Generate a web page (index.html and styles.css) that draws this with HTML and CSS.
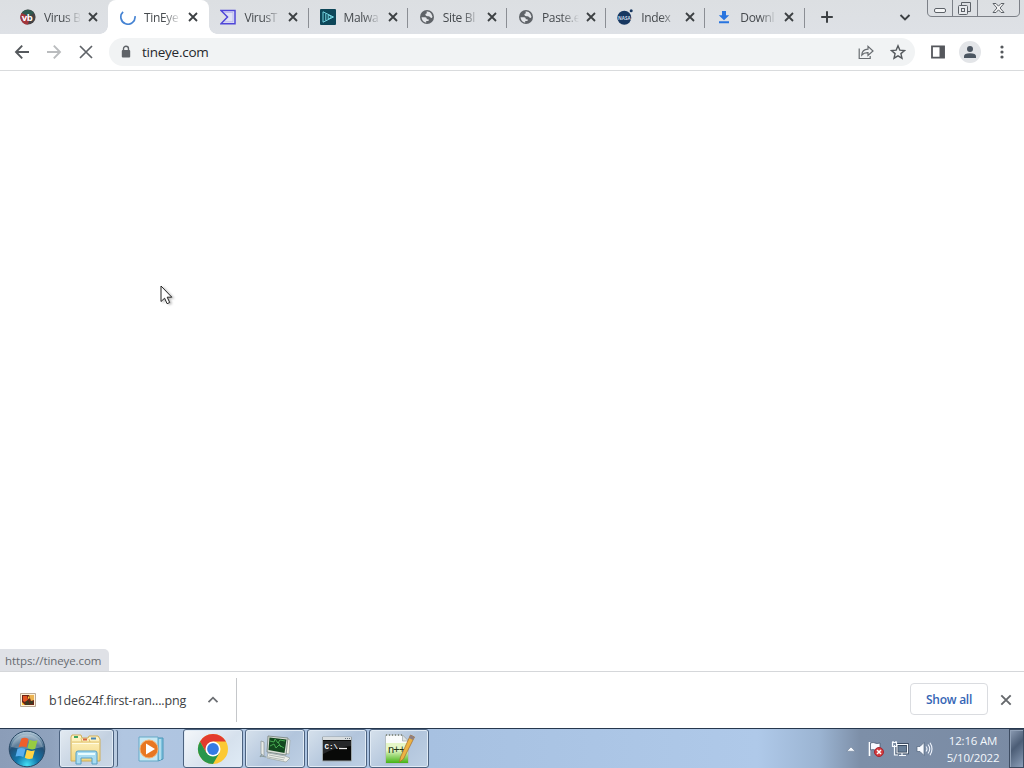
FILE: index.html
```html
<!DOCTYPE html>
<html lang="en">
<head>
    <meta charset="UTF-8" />
    <title>TinEye</title>
    <link rel="stylesheet" href="styles.css">
</head>
<body>
<svg class="defs" width="0" height="0">
    <defs>
        <symbol id="close" viewBox="0 0 16 16"><path d="M4 4l8 8M12 4l-8 8" fill="none" stroke="currentColor" stroke-width="1.8"/></symbol>
        <symbol id="globe" viewBox="0 0 16 16">
            <circle cx="8" cy="8" r="7" fill="#5f6368"/>
            <path d="M2.5 8.3h3.6q1.8.2 1.8 2h1.7v1.8H7.2v1.6Q3 13 2.5 8.3zM7.5 2.6q3.2-.4 4.8 2.1l1.2 3q-.5 1.6-1.8 1.1-.8-1.7-2.5-1.5-2.8.2-2.9-1.7.1-1.2 1.6-1.3z" fill="#e3e5e8"/>
        </symbol>
        <linearGradient id="folder" x2="0" y2="1"><stop stop-color="#fff6cc"/><stop offset="1" stop-color="#f2d67e"/></linearGradient>
        <linearGradient id="pad" x2="0" y2="1"><stop offset=".35" stop-color="#e6f7c8"/><stop offset="1" stop-color="#43b314"/></linearGradient>
        <radialGradient id="orb" cx=".5" cy=".95" r=".9"><stop stop-color="#45e0f5"/><stop offset=".35" stop-color="#1277ab"/><stop offset=".7" stop-color="#234f75"/><stop offset="1" stop-color="#a8c0d0"/></radialGradient>
    </defs>
</svg>

<header class="tab-strip">
    <div class="tab">
        <svg class="favicon" viewBox="0 0 16 16"><circle cx="8" cy="8" r="7.6" fill="#454345"/><path d="M1 5a7.6 7.6 0 0 1 13-1L8 8z" fill="#2f5a50"/><path d="M1.5 4A7.6 7.6 0 0 0 8 15.6L10 8z" fill="#a3363b"/><text x="1.8" y="11.6" class="vb">vb</text></svg>
        <span class="title">Virus B</span>
        <svg class="tab-close"><use href="#close"/></svg>
    </div>
    <div class="tab active">
        <svg class="favicon" viewBox="0 0 16 16"><path d="M3.1 2.9A7.1 7.1 0 1 0 15 7.2" fill="none" stroke="#4583d3" stroke-width="1.7"/></svg>
        <span class="title">TinEye</span>
        <svg class="tab-close"><use href="#close"/></svg>
    </div>
    <div class="tab">
        <svg class="favicon" viewBox="0 0 16 16"><path d="M1 1.500h14v13.300H1L7.500 8z" fill="#dfe1f5" stroke="#4f46d8" stroke-width="1.500"/><path d="M4 3.500h9v9.300H4" fill="none" stroke="#a9a5ea" stroke-width=".6"/></svg>
        <span class="title">VirusT</span>
        <svg class="tab-close"><use href="#close"/></svg>
    </div>
    <div class="tab">
        <svg class="favicon" viewBox="0 0 16 16"><rect width="16" height="16" rx="1" fill="#0d4658"/><path d="M3 2.800v10.400L13.500 8zM5.800 4.500v7M8.200 5.800v4.400L11.800 8z" fill="none" stroke="#74d4e1" stroke-width="1"/></svg>
        <span class="title">Malwa</span>
        <svg class="tab-close"><use href="#close"/></svg>
    </div>
    <div class="tab">
        <svg class="favicon"><use href="#globe"/></svg>
        <span class="title">Site Bl</span>
        <svg class="tab-close"><use href="#close"/></svg>
    </div>
    <div class="tab">
        <svg class="favicon"><use href="#globe"/></svg>
        <span class="title">Paste.e</span>
        <svg class="tab-close"><use href="#close"/></svg>
    </div>
    <div class="tab">
        <svg class="favicon" viewBox="0 0 16 16"><circle cx="7.300" cy="8.800" r="7" fill="#173861"/><circle cx="14.200" cy="1.800" r="1.500" fill="#173861"/><text x="1" y="10.600" class="nasa">NASA</text></svg>
        <span class="title">Index</span>
        <svg class="tab-close"><use href="#close"/></svg>
    </div>
    <div class="tab">
        <svg class="favicon" viewBox="0 0 16 16"><path d="M6 2h4v4.200h3.200L8 11.300 2.800 6.200H6zM3 12.300h10v1.900H3z" fill="#2874df"/></svg>
        <span class="title">Downl</span>
        <svg class="tab-close"><use href="#close"/></svg>
    </div>
    <svg class="new-tab" viewBox="0 0 16 16"><path d="M8 2.200v11.600M2.200 8h11.600" stroke="#3c4043" stroke-width="2"/></svg>
    <svg class="tab-search" viewBox="0 0 16 16"><path d="M3.500 6L8 10.500 12.500 6" fill="none" stroke="#3c4043" stroke-width="1.900"/></svg>
    <svg class="window-buttons" viewBox="0 0 94 18" fill="none">
        <path d="M.5 0v12q0 4.500 4.500 4.500h83q4.500 0 4.500-4.500V0M25.500 0v16M50.500 0v16" stroke="#7c8087"/>
        <g stroke="#5d6268"><rect x="7.500" y="8.500" width="11" height="4" rx="1.500" fill="#f5f6f7"/><path d="M34.500 5V2.500h9v9h-3"/><rect x="31.500" y="5.500" width="9" height="9" rx="1" fill="#e8eaed"/><rect x="34.500" y="8.500" width="3" height="3"/><path d="M66 3.500h3l2.500 2.700L74 3.500h3l-4 4.500 4 4.500h-3l-2.500-2.700L69 12.500h-3L70 8z" fill="#f8f8f8"/></g>
    </svg>
</header>

<nav class="toolbar">
    <svg class="tool" viewBox="0 0 16 16"><path d="M15 8H2M8.200 1.700L2 8l6.200 6.300" fill="none" stroke="#55595d" stroke-width="1.900"/></svg>
    <svg class="tool" viewBox="0 0 16 16"><path d="M1 8h13M7.800 1.700L14 8l-6.200 6.300" fill="none" stroke="#babcbe" stroke-width="1.900"/></svg>
    <svg class="tool" viewBox="0 0 16 16"><path d="M2 2l12 12M14 2L2 14" fill="none" stroke="#5f6368" stroke-width="1.700"/></svg>
    <div class="address">
        <svg class="lock" viewBox="0 0 10 14"><path d="M2.500 6V3.700a2.500 2.500 0 0 1 5 0V6" fill="none" stroke="#5f6368" stroke-width="1.400"/><rect x=".8" y="5" width="8.400" height="7.500" rx="1" fill="#5f6368"/></svg>
        <span class="url">tineye.com</span>
        <svg class="action" viewBox="0 0 16 16" fill="none" stroke="#686c70" stroke-width="1.200"><path d="M1.200 4.500v10h11V12M3.800 11Q4 5.300 10 5.100V2.400l5 4.600-5 4.400V8.600q-4-.2-6.200 2.400z"/></svg>
        <svg class="action" viewBox="0 0 16 16"><path d="M8 1.800l1.800 4.300 4.700.4-3.600 3.100 1.100 4.600L8 11.800l-4 2.400 1.100-4.600-3.600-3.100 4.700-.4z" fill="none" stroke="#55595d" stroke-width="1.400"/></svg>
    </div>
    <svg class="panel" viewBox="0 0 16 16"><path d="M2 2.300h12v11.400H2z" fill="#fff" stroke="#55575c" stroke-width="1.800"/><path d="M9.500 2h5v12h-5z" fill="#55575c"/></svg>
    <svg class="avatar" viewBox="0 0 22 22"><circle cx="11" cy="11" r="11" fill="#e3e5e8"/><circle cx="11" cy="8" r="3" fill="#4c5661"/><path d="M5 17v-1.700q0-3.100 6-3.100t6 3.100V17z" fill="#4c5661"/></svg>
    <svg class="more" viewBox="0 0 16 16" fill="#55585c"><circle cx="8" cy="3" r="1.600"/><circle cx="8" cy="8" r="1.600"/><circle cx="8" cy="13" r="1.600"/></svg>
</nav>

<main class="page">
    <div class="status">https://tineye.com</div>
    <svg class="cursor" viewBox="0 0 14 21"><path d="M1 1v15.500l3.600-3.300 2.500 5.500 2.600-1.200-2.500-5.300h4.600z" fill="#fff" stroke="#222" stroke-width="1"/></svg>
</main>

<div class="downloads">
    <div class="download">
        <svg class="thumb" viewBox="0 0 16 14"><path d="M.5.500h15v13H.500z" fill="#fff2d8" stroke="#b9a997"/><path d="M2 2h12v10H2z" fill="#6c2417"/><path d="M3 3h4l1 4-3 2-2-1z" fill="#e25422"/><path d="M9 2h5v5l-3 1z" fill="#ecb351"/><path d="M5 9l3-2 2 5H6zM10 8h3v3h-3z" fill="#3a3922"/><path d="M2 9l3 3H2zM8 3l2 2-2 1z" fill="#ffc93d"/></svg>
        <span class="file-name">b1de624f.first-ran....png</span>
        <svg class="chevron" viewBox="0 0 16 16"><path d="M3.500 10.200L8 5.700l4.500 4.500" fill="none" stroke="#6b6e72" stroke-width="1.800"/></svg>
    </div>
    <button class="show-all">Show all</button>
    <svg class="shelf-close" viewBox="0 0 16 16"><path d="M3.300 3.300l9.400 9.400M12.700 3.300l-9.400 9.400" stroke="#65686c" stroke-width="1.900"/></svg>
</div>

<footer class="taskbar">
    <svg class="start" viewBox="0 0 38 38">
        <circle cx="19" cy="19" r="17.800" fill="url(#orb)" stroke="#294966"/>
        <path d="M3 17A16.500 16.500 0 0 1 35 17Q19 21 3 17z" fill="#fff" opacity=".28"/>
        <path d="M13.500 8.500q3.500-1.500 7 .5l-2 8.500q-4-2-8-.3z" fill="#ee5f2c"/><path d="M21.500 9.800q4 2 8 .5l-2.300 8.500q-4 1.500-7.700-.8z" fill="#97cc42"/><path d="M9.500 18.700q4-1.700 8 .3l-2.200 8q-4-2-7.800-.4z" fill="#58aeee"/><path d="M18.800 19.800q4 2 8 .5l-2.300 8.200q-4 1.300-7.700-.8z" fill="#ffd445"/>
    </svg>
    <div class="task framed stacked">
        <svg class="task-icon" viewBox="0 0 34 34">
            <path d="M2 29V5l1-2h9l1 3h6l1-2h9l2 3v22z" fill="url(#folder)" stroke="#cfae58"/>
            <path d="M3 10h27M12 6l1 4M20 7l1 3" fill="none" stroke="#d9b75e" stroke-width=".8"/><path d="M3 11.500h27" stroke="#fffbe0"/>
            <path d="M5 5h4" stroke="#3da660" stroke-width="2"/><path d="M14 7.500h4" stroke="#d66342" stroke-width="2"/><path d="M22 6.500h5" stroke="#4485b4" stroke-width="2"/>
            <path d="M7 32V21q0-2 2-2h17q2 0 2 2v11h-5v-6H12v6z" fill="#a9dcf1" stroke="#569fc5"/><path d="M9 22h17" stroke="#e8fcff" stroke-width="2"/>
        </svg>
    </div>
    <div class="task media">
        <svg class="task-icon" viewBox="0 0 34 34"><path d="M23 6h6v21l-5 2z" fill="#7fc2de" stroke="#4a97b9"/><path d="M26 7v21" stroke="#dff5fa"/><path d="M5 5h19v24H5z" fill="#c6e8f4" stroke="#64a9c7"/><circle cx="15" cy="17" r="9" fill="#e87722" stroke="#f5b171"/><path d="M12 11.500v11l9-5.500z" fill="#fff"/></svg>
    </div>
    <div class="task framed current">
        <svg class="task-icon" viewBox="0 0 34 34"><circle cx="17" cy="17" r="15" fill="#fcc934"/><path d="M4 9.500A15 15 0 0 1 30 9.500H17L10.500 21z" fill="#e33b2e"/><path d="M4 9.500A15 15 0 0 0 17 32l6.500-11.200-13 .2z" fill="#28964b"/><circle cx="17" cy="17" r="7.500" fill="#fff"/><circle cx="17" cy="17" r="5.900" fill="#357be4"/></svg>
    </div>
    <div class="task framed">
        <svg class="task-icon" viewBox="0 0 34 34"><path d="M3 9v13l3 2V10z" fill="#e8ebe9" stroke="#8a9393" stroke-width=".7"/><path d="M28 6l4 2-1 14-5-1z" fill="#f0f1e8" stroke="#a0a79f" stroke-width=".7"/><path d="M10 4l20 2-2 17-19-3z" fill="#d9ded7" stroke="#737f79" stroke-width=".8"/><path d="M11.500 5.500l17 2-2 13.500-16-3z" fill="#12481e"/><path d="M12 9l4 1 1-3 3 4 2-3 5 1M12 14l4-2 2 4 3-3 5 3M20 10l3 5" fill="none" stroke="#45a950"/><path d="M10 21l17 3 5 2-4 4-19-4z" fill="#eceee9" stroke="#9ba39f" stroke-width=".7"/><path d="M11 23l16 3M10 25l16 3" stroke="#b1b8b4"/><path d="M3 24l5 1M4 22l-2 3" stroke="#899" stroke-width="1.200"/></svg>
    </div>
    <div class="task framed">
        <svg class="task-icon" viewBox="0 0 34 34"><path d="M2.500 5h29v24h-29z" fill="#080908" stroke="#9ca5a8"/><path d="M3 5h28v3H3z" fill="#d8dddf"/><path d="M25 6.500h5" stroke="#65717b" stroke-dasharray="1 1"/><path d="M3 9h28v5q-15 1-28 8z" fill="#26282a"/><text x="4.500" y="17" class="prompt">C:\</text><path d="M19 16.500h8" stroke="#eee" stroke-width="1.300"/></svg>
    </div>
    <div class="task framed">
        <svg class="task-icon" viewBox="0 0 34 34"><path d="M3.500 3h17l6 6v22h-23z" fill="#fafcfc" stroke="#a4aeb0" stroke-width=".7"/><path d="M4 11h22v20H4z" fill="url(#pad)"/><path d="M4 3h17" stroke="#89928a" stroke-width="2" stroke-dasharray="1 2"/><path d="M20.500 3v6h6z" fill="#dfe4e5" stroke="#9da6a7" stroke-width=".7"/><text x="6" y="21" class="npp">n++</text><path d="M28.500 3l4 2-11 22-4 3 1-5z" fill="#edb343" stroke="#a56c2a" stroke-width=".7"/><path d="M28.500 3l4 2-1.500 3-4-2z" fill="#8d7f83"/></svg>
    </div>
    <div class="tray">
        <svg class="tray-up" viewBox="0 0 10 6"><path d="M.8 5.200L5 1l4.200 4.200z" fill="#f8fbff" stroke="#65758c" stroke-width=".5"/></svg>
        <svg class="tray-icon" viewBox="0 0 18 18"><path d="M2.500 2v14" stroke="#fff" stroke-width="1.600"/><path d="M3.500 3q3-1 4.500 0t5 0v7q-3 1-5 0t-4.500 0z" fill="#f8faff" stroke="#44546c" stroke-width=".7"/><circle cx="12" cy="12" r="4.500" fill="#d53d3e" stroke="#a52532"/><path d="M10 10l4 4M14 10l-4 4" stroke="#fff" stroke-width="1.500"/></svg>
        <svg class="tray-icon" viewBox="0 0 18 18"><path d="M6 4.500h10.500v8.500H6z" fill="#697f98" stroke="#28384e" stroke-width="2.500"/><path d="M6 4.500h10.500v8.500H6zM11 13v2M8 15.500h7M3.500 5v10H7M1.500 2.500h4v4h-4zM2 1v2M5 1v2" fill="none" stroke="#f7fbff" stroke-width="1.200"/></svg>
        <svg class="tray-icon" viewBox="0 0 18 18"><path d="M2 6.500h3L9 2.500v13l-4-4H2z" fill="#f7faff" stroke="#52647c" stroke-width=".7"/><path d="M11 6.500q2 2.500 0 5M13 4.500q3.500 4.500 0 9M15 2.800q4 6 0 12.400" fill="none" stroke="#f2f7ff" stroke-width="1.100"/></svg>
        <div class="clock"><span>12:16 AM</span><span>5/10/2022</span></div>
        <div class="show-desktop"></div>
    </div>
</footer>
</body>
</html>
```
FILE: styles.css
```css
* {
    box-sizing: border-box;
}
body {
    margin: 0;
    width: 1024px;
    height: 768px;
    display: flex;
    flex-direction: column;
    overflow: hidden;
    background: #fff;
    font-family: "Open Sans", "Noto Sans", sans-serif;
    font-size: 12px;
    color: #3c4043;
}
svg {
    display: block;
    flex: none;
}
.defs {
    position: absolute;
}

/* tabs */
.tab-strip {
    height: 34px;
    flex: none;
    display: flex;
    align-items: center;
    padding-left: 8px;
    background: linear-gradient(#dcdfe2, #dee1e6);
}
.tab {
    width: 99.2px;
    height: 34px;
    flex: none;
    display: flex;
    align-items: center;
    padding-left: 12px;
    position: relative;
}
.tab:nth-child(n+3)::after {
    content: "";
    position: absolute;
    right: -1px;
    top: 8px;
    width: 1px;
    height: 20px;
    background: #8b8e94;
}
.tab.active {
    background: #fff;
    border-radius: 8px 8px 0 0;
    width: 101px;
    margin-left: 0.8px;
    margin-right: -0.6px;
}
.tab.active::before,
.tab.active::after {
    content: "";
    position: absolute;
    bottom: 0;
    left: -8px;
    right: auto;
    top: auto;
    width: 8px;
    height: 8px;
    background: radial-gradient(circle at 0 0, transparent 7.5px, #fff 8px);
}
.tab.active::after {
    left: 100%;
    background: radial-gradient(circle at 100% 0, transparent 7.5px, #fff 8px);
}
.favicon {
    width: 16px;
    height: 16px;
}
.vb {
    font: bold 9.5px "Open Sans", sans-serif;
    letter-spacing: -0.4px;
    fill: #fff;
}
.nasa {
    font: bold 4.6px "Open Sans", sans-serif;
    fill: #c8d8e7;
}
.title {
    width: 39px;
    margin-left: 8px;
    overflow: hidden;
    white-space: nowrap;
    letter-spacing: -0.35px;
    color: #45494d;
    -webkit-mask-image: linear-gradient(90deg, #000 50%, transparent 95%);
    mask-image: linear-gradient(90deg, #000 50%, transparent 95%);
}
.tab-close {
    width: 16px;
    height: 16px;
    margin-left: 2px;
}
.new-tab {
    width: 16px;
    height: 16px;
    margin-left: 15px;
}
.tab-search {
    width: 16px;
    height: 16px;
    margin-left: auto;
}
.window-buttons {
    width: 94px;
    height: 18px;
    margin-left: 14px;
    margin-right: 3px;
    align-self: flex-start;
}

/* toolbar */
.toolbar {
    height: 37px;
    flex: none;
    display: flex;
    align-items: center;
    padding-left: 14px;
    border-bottom: 1px solid #d9dbdd;
}
.tool {
    width: 16px;
    height: 16px;
    margin-right: 16px;
}
.address {
    width: 806px;
    height: 28px;
    display: flex;
    align-items: center;
    margin-left: -1px;
    padding: 0 9px 0 12px;
    border-radius: 14px;
    background: #f1f3f4;
}
.lock {
    width: 10px;
    height: 14px;
}
.url {
    margin-left: 11px;
    margin-right: auto;
    font-size: 13.5px;
    letter-spacing: -0.25px;
    color: #25282c;
}
.action {
    width: 16px;
    height: 16px;
    margin-left: 16px;
}
.panel {
    width: 16px;
    height: 16px;
    margin-left: 15px;
}
.avatar {
    width: 22px;
    height: 22px;
    margin-left: 13px;
}
.more {
    width: 16px;
    height: 16px;
    margin-left: 13px;
}

/* page */
.page {
    flex: 1;
    position: relative;
}
.status {
    position: absolute;
    left: 0;
    bottom: 0;
    width: 109px;
    height: 22px;
    padding-left: 5px;
    line-height: 24px;
    border-radius: 0 5px 0 0;
    background: #dfe1e6;
    color: #666a6f;
    font-size: 11.5px;
    letter-spacing: -0.1px;
}
.cursor {
    position: absolute;
    left: 160px;
    top: 214px;
    width: 14px;
    height: 21px;
    filter: drop-shadow(2px 1px 1px rgba(0, 0, 0, 0.25));
}

/* downloads */
.downloads {
    height: 57px;
    flex: none;
    display: flex;
    align-items: center;
    border-top: 1px solid #d5d7da;
}
.download {
    width: 237px;
    height: 44px;
    display: flex;
    align-items: center;
    padding-left: 20px;
    border-right: 1px solid #c5c7ca;
}
.thumb {
    width: 16px;
    height: 14px;
}
.file-name {
    width: 142px;
    margin-left: 13px;
    margin-right: 14px;
    font-size: 12.5px;
    letter-spacing: -0.12px;
    white-space: nowrap;
}
.chevron {
    width: 16px;
    height: 16px;
}
.show-all {
    width: 78px;
    height: 32px;
    margin-left: auto;
    margin-top: -2px;
    padding: 0;
    border: 1px solid #dadce0;
    border-radius: 4px;
    background: #fff;
    color: #3565b5;
    font: 600 12px "Open Sans", sans-serif;
    letter-spacing: -0.25px;
}
.shelf-close {
    width: 16px;
    height: 16px;
    margin: 0 10px;
}

/* taskbar */
.taskbar {
    height: 40px;
    flex: none;
    display: flex;
    align-items: center;
    padding-left: 8px;
    border-top: 1px solid #26374d;
    background: linear-gradient(90deg, #8b9db8, #8fa2bd 5%, #b1c6e1 12%, #a7c1e1 42%, #afc9e9 74%, #9bb4d2 80%, #7d8fa8 84%, #7a8ba4);
}
.start {
    width: 38px;
    height: 38px;
}
.task {
    width: 60px;
    height: 39px;
    flex: none;
    display: flex;
    align-items: center;
    justify-content: center;
    margin-right: 2px;
}
.framed {
    border: 1px solid #4c627f;
    border-radius: 3px;
    background: linear-gradient(135deg, #d6e1ec, #b2c5dc 55%, #bed0e4);
    box-shadow: inset 0 0 0 1px #e1ebf5;
}
.stacked {
    width: 55px;
    margin-left: 13px;
    margin-right: 7px;
    background: linear-gradient(135deg, #e3eaf1, #c3d1e1 60%, #cbd8e6);
    box-shadow: inset 0 0 0 1px #e1ebf5, 4px 0 0 -1px #b9cbe0, 5px 0 0 -1px #4c627f;
}
.media {
    width: 60px;
    margin-right: 2px;
}
.current {
    background: linear-gradient(135deg, #f4f7fa, #d6e1ed 60%, #dfebf6);
}
.task-icon {
    width: 34px;
    height: 34px;
    margin-left: -1px;
}
.prompt {
    font: bold 7.5px "Liberation Mono", monospace;
    fill: #fff;
}
.npp {
    font: 11px "Liberation Sans", sans-serif;
    letter-spacing: -0.8px;
    fill: #203314;
}
.tray {
    height: 39px;
    display: flex;
    align-items: center;
    margin-left: auto;
}
.tray-up {
    width: 10px;
    height: 6px;
    margin-right: 11px;
}
.tray-icon {
    width: 18px;
    height: 18px;
    margin-right: 6px;
}
.clock {
    width: 64px;
    margin-left: 2px;
    margin-right: 4px;
    display: flex;
    flex-direction: column;
    align-items: center;
    line-height: 17px;
    font-size: 11.5px;
    letter-spacing: -0.2px;
    color: #f3f7fc;
}
.show-desktop {
    width: 15px;
    height: 39px;
    border: 1px solid #3d4c62;
    box-shadow: inset 1px 1px 0 #92a2b8;
    background: linear-gradient(135deg, #8d9db4, #4c5d76 45%, #8b9eb8);
}
```
